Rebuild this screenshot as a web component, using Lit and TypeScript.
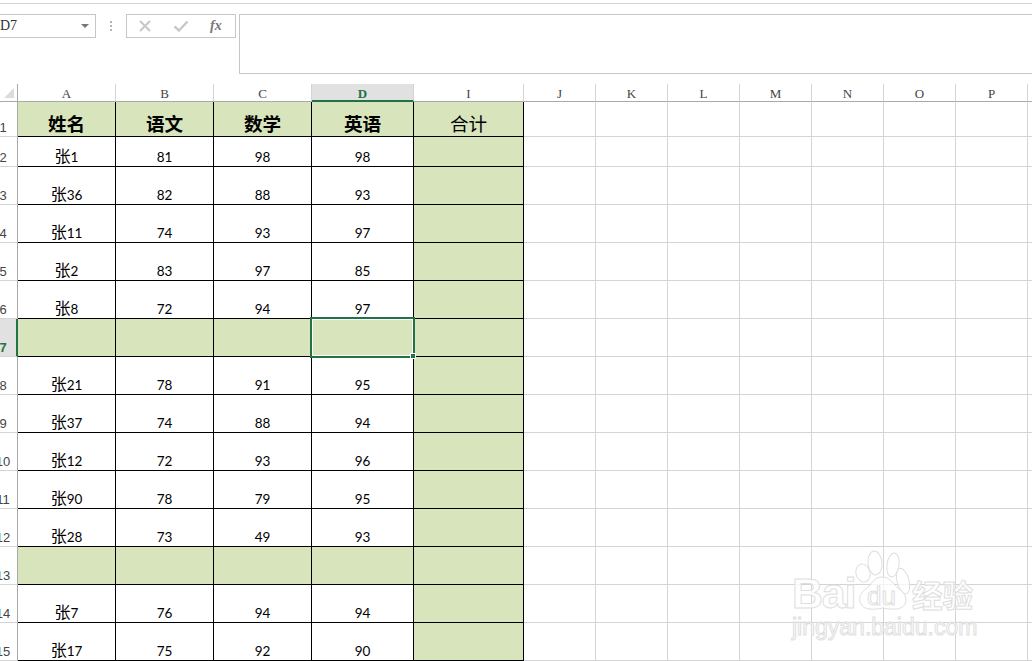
import { LitElement, html, css } from "lit";
import { customElement } from "lit/decorators.js";

const TABLE_COLS = ["A", "B", "C", "D", "I"];
const EMPTY_COLS = ["J", "K", "L", "M", "N", "O", "P", "Q"];
const ROWS: (string[] | null)[] = [
  ["1", "81", "98", "98"],
  ["36", "82", "88", "93"],
  ["11", "74", "93", "97"],
  ["2", "83", "97", "85"],
  ["8", "72", "94", "97"],
  null,
  ["21", "78", "91", "95"],
  ["37", "74", "88", "94"],
  ["12", "72", "93", "96"],
  ["90", "78", "79", "95"],
  ["28", "73", "49", "93"],
  null,
  ["7", "76", "94", "94"],
  ["17", "75", "92", "90"],
];

@customElement("app-root")
export class AppRoot extends LitElement {
  static styles = css`
    :host {
      display: block;
      position: relative;
      width: 1032px;
      height: 661px;
      overflow: hidden;
      background: #fff;
      font-family: "Liberation Serif", serif;
    }
    .top {
      height: 84px;
      box-sizing: border-box;
      padding-top: 3px;
    }
    .topline {
      height: 1px;
      background: #d4d4d4;
    }
    .bar {
      display: flex;
      align-items: flex-start;
      margin-top: 10px;
    }
    .namebox {
      width: 96px;
      height: 24px;
      box-sizing: border-box;
      border: 1px solid #c6c6c6;
      border-left: none;
      display: flex;
      align-items: center;
      justify-content: space-between;
      padding-right: 6px;
      font-size: 14px;
      color: #333;
    }
    .caret {
      width: 0;
      height: 0;
      border-left: 4px solid transparent;
      border-right: 4px solid transparent;
      border-top: 4px solid #777;
    }
    .grip {
      width: 30px;
      height: 24px;
      display: flex;
      flex-direction: column;
      align-items: center;
      justify-content: center;
      gap: 2px;
    }
    .grip i {
      width: 2px;
      height: 2px;
      background: #b4b4b4;
    }
    .fnbox {
      width: 110px;
      height: 24px;
      box-sizing: border-box;
      border: 1px solid #c6c6c6;
      display: flex;
      align-items: center;
      padding-left: 11px;
      gap: 21px;
    }
    .fnbox svg {
      display: block;
    }
    .fx {
      font: italic 700 14px "Liberation Serif", serif;
      color: #777;
    }
    .formula {
      flex: 1;
      height: 60px;
      margin-left: 3px;
      box-sizing: border-box;
      border: 1px solid #c6c6c6;
      border-right: none;
    }
    .sheet {
      display: grid;
      grid-template-columns: 18px 98px 98px 98px 102px 110px repeat(8, 72px);
      grid-template-rows: 18px 35px 30px repeat(13, 38px);
    }
    .corner,
    .ch,
    .rh {
      box-sizing: border-box;
      overflow: hidden;
      color: #444;
      font-size: 13px;
    }
    .corner {
      border-right: 1px solid #a9a9a9;
      border-bottom: 1px solid #a9a9a9;
    }
    .corner svg {
      display: block;
      margin: 4px 0 0 4px;
    }
    .ch {
      border-right: 1px solid #d4d4d4;
      border-bottom: 1px solid #a9a9a9;
      display: flex;
      align-items: center;
      justify-content: center;
      padding-top: 2px;
    }
    .ch.sel {
      background: #e1e1e1;
      border-bottom: 2px solid #217346;
      color: #217346;
      font-weight: 700;
      padding-top: 3px;
    }
    .rh {
      border-right: 1px solid #a9a9a9;
      border-bottom: 1px solid #d4d4d4;
      display: flex;
      align-items: flex-end;
      justify-content: center;
      padding-right: 11px;
      padding-bottom: 1px;
      white-space: nowrap;
      font-family: "Liberation Sans", sans-serif;
    }
    .rh.sel {
      background: #e1e1e1;
      border-right: 2px solid #217346;
      color: #217346;
      font-weight: 700;
      padding-right: 10px;
    }
    .cell {
      box-sizing: border-box;
      border-right: 1px solid #000;
      border-bottom: 1px solid #000;
      display: flex;
      align-items: flex-end;
      justify-content: center;
      color: #000;
      font: 13.5px/17px Lato, "Noto Sans CJK SC", sans-serif;
      position: relative;
    }
    .han {
      font-family: "Noto Sans CJK SC", sans-serif;
      font-size: 16px;
      line-height: 17px;
    }
    .cell.green {
      background: #d8e4bc;
    }
    .cell.head {
      align-items: flex-start;
      font: 700 18.6px/24px "Noto Sans CJK SC", sans-serif;
      padding-top: 9px;
    }
    .cell.head.light {
      font-weight: 400;
    }
    .blank {
      box-sizing: border-box;
      border-right: 1px solid #d4d4d4;
      border-bottom: 1px solid #d4d4d4;
    }
    .selbox {
      position: absolute;
      left: -2px;
      top: -2px;
      right: -2px;
      bottom: -2px;
      border: 2px solid #217346;
      box-shadow: inset 0 0 0 1px #fff;
      pointer-events: none;
      z-index: 1;
    }
    .selbox::after {
      content: "";
      position: absolute;
      right: -3px;
      bottom: -3px;
      width: 4px;
      height: 4px;
      background: #217346;
      border: 1px solid #fff;
    }
    .mark {
      position: absolute;
      left: 792px;
      top: 550px;
      width: 190px;
      height: 90px;
      color: rgba(255, 255, 255, 0.75);
      -webkit-text-stroke: 1px #dedede;
      font-family: "Liberation Sans", sans-serif;
      z-index: 2;
      pointer-events: none;
      white-space: nowrap;
    }
    .mark span,
    .mark svg {
      position: absolute;
    }
    .bai {
      left: 0;
      top: 19px;
      font-weight: 700;
      font-size: 43px;
      line-height: 48px;
      letter-spacing: -1.2px;
    }
    .paw {
      left: 63px;
      top: 0;
    }
    .du {
      left: 75px;
      top: 32px;
      font-size: 26px;
      line-height: 28px;
    }
    .cn {
      left: 120px;
      top: 24px;
      font: 700 30.5px/40px "Noto Sans CJK SC", sans-serif;
    }
    .url {
      left: 0;
      top: 64px;
      font-size: 23px;
      line-height: 26px;
    }
  `;

  private head(name: string, light = false) {
    return html`<div class="cell green head ${light ? "light" : ""}">${name}</div>`;
  }

  private dataRow(row: string[] | null, index: number) {
    const no = index + 2;
    const selected = no === 7;
    const cols = row ?? ["", "", "", ""];
    return html`
      <div class="rh ${selected ? "sel" : ""}">${no}</div>
      ${cols.map(
        (v, i) =>
          html`<div class="cell ${row ? "" : "green"}">
            ${row && i === 0 ? html`<div><span class="han">张</span>${v}</div>` : v}
            ${selected && i === 3 ? html`<div class="selbox"></div>` : ""}
          </div>`
      )}
      <div class="cell green"></div>
      ${EMPTY_COLS.map(() => html`<div class="blank"></div>`)}
    `;
  }

  render() {
    return html`
      <div class="top">
        <div class="topline"></div>
        <div class="bar">
          <div class="namebox"><span>D7</span><span class="caret"></span></div>
          <div class="grip"><i></i><i></i><i></i></div>
          <div class="fnbox">
            <svg width="14" height="12" viewBox="0 0 14 12">
              <path d="M2 1l10 10M12 1L2 11" stroke="#c8c8c8" stroke-width="2" fill="none" />
            </svg>
            <svg width="16" height="12" viewBox="0 0 16 12">
              <path d="M1.5 6.5L6 10.5L14.5 1.5" stroke="#c8c8c8" stroke-width="2.4" fill="none" />
            </svg>
            <span class="fx">fx</span>
          </div>
          <div class="formula"></div>
        </div>
      </div>
      <div class="sheet">
        <div class="corner">
          <svg width="10" height="10" viewBox="0 0 10 10"><path d="M10 0V10H0Z" fill="#dcdcdc" /></svg>
        </div>
        ${TABLE_COLS.map((c) => html`<div class="ch ${c === "D" ? "sel" : ""}">${c}</div>`)}
        ${EMPTY_COLS.map((c) => html`<div class="ch">${c === "Q" ? "" : c}</div>`)}
        <div class="rh">1</div>
        ${this.head("姓名")}${this.head("语文")}${this.head("数学")}${this.head("英语")}${this.head("合计", true)}
        ${EMPTY_COLS.map(() => html`<div class="blank"></div>`)}
        ${ROWS.map((r, i) => this.dataRow(r, i))}
      </div>
      <div class="mark">
        <svg class="paw" width="58" height="62" viewBox="0 0 58 62">
          <g fill="rgba(255,255,255,.75)" stroke="#dedede">
            <ellipse cx="8" cy="23" rx="7" ry="9" transform="rotate(-15 8 23)" />
            <ellipse cx="20" cy="13" rx="7" ry="12" transform="rotate(-5 20 13)" />
            <ellipse cx="38" cy="15" rx="6" ry="12" transform="rotate(8 38 15)" />
            <ellipse cx="48" cy="31" rx="6" ry="13" transform="rotate(-15 48 31)" />
            <path d="M27 27C35 27 38 34 43 38C51 43 52 50 50 54C47 60 38 60 28 58C18 60 9 60 6 54C3 48 5 43 12 38C17 34 19 27 27 27Z" />
          </g>
        </svg>
        <span class="bai">Bai</span>
        <span class="du">du</span>
        <span class="cn">经验</span>
        <span class="url">jingyan.baidu.com</span>
      </div>
    `;
  }
}
